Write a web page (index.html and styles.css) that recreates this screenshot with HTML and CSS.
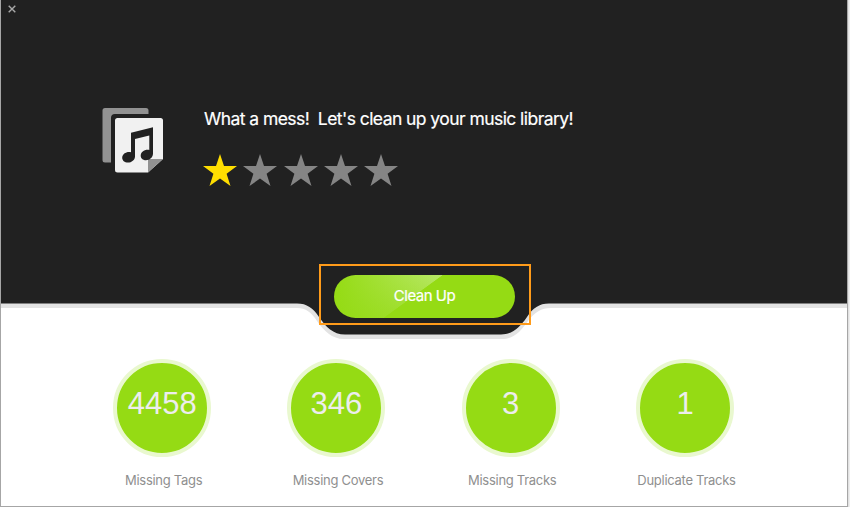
FILE: index.html
```html
<!DOCTYPE html>
<html lang="en">
<head>
<meta charset="utf-8">
<title>Music Library Clean Up</title>
<link rel="stylesheet" href="styles.css">
</head>
<body>
<main class="window">
  <header class="hero">
    <svg class="hero-shape" width="846" height="342" viewBox="1 0 846 342" aria-hidden="true">
      <path fill="#e3e3e3" d="M1 0H847V308H551C541 308 535 312 528 321C521 331 514 339 502 339H344C332 339 324 331 317 321C311 312 306 308 297 308H1Z"/>
      <path fill="#212121" d="M1 0H847V303.500H549C539 303.500 533 308 527 317C520 327 513 334.500 501 334.500H345C333 334.500 326 327 319 317C313 308 307 303.500 297 303.500H1Z"/>
    </svg>
    <button class="close" aria-label="Close">
      <svg width="8" height="8" viewBox="0 0 8 8"><path d="M.7.7 7.300 7.300M7.300.7.7 7.300" stroke="#a9a9a9" stroke-width="1.400"/></svg>
    </button>
    <section class="summary">
      <svg class="library-icon" width="62" height="66" viewBox="102 108 62 66" aria-hidden="true">
        <path fill="#929292" d="M105 108H146Q148.500 108 148.500 110.500V114H115Q111 114 111 118V162.500H105Q102.500 162.500 102.500 160V110.500Q102.500 108 105 108Z"/>
        <path fill="#f1f1f1" d="M117.500 118H160.500Q163 118 163 120.500V159L148 172.500H117.500Q115 172.500 115 170V120.500Q115 118 117.500 118Z"/>
        <path fill="#929292" d="M148 159H163L148 172.500Z"/>
        <path fill="#212121" d="M131 132.800 153 127.200V153.500C153 157.500 149.500 160.200 146 160.200C142.500 160.200 140.700 158 140.700 155.700C140.700 152.200 144 149.700 147.500 149.700C148.300 149.700 148.900 149.800 149.300 150V135.500L135 139V156.500C135 160 131.500 162.600 128 162.600C124.500 162.600 122.200 160.400 122.200 157.800C122.200 154.400 125.500 152 129 152C129.800 152 130.500 152.100 131 152.300Z"/>
      </svg>
      <div class="verdict">
        <h1>What a mess!&nbsp; Let's clean up your music library!</h1>
        <div class="stars" aria-label="1 of 5 stars">
          <svg class="star lit" viewBox="0 0 34 32"><path d="M17 0 21 11.900 34 12 23.600 19.700 27.500 32 17 24.600 6.500 32 10.400 19.700 0 12 13 11.900Z"/></svg>
          <svg class="star" viewBox="0 0 34 32"><path d="M17 0 21 11.900 34 12 23.600 19.700 27.500 32 17 24.600 6.500 32 10.400 19.700 0 12 13 11.900Z"/></svg>
          <svg class="star" viewBox="0 0 34 32"><path d="M17 0 21 11.900 34 12 23.600 19.700 27.500 32 17 24.600 6.500 32 10.400 19.700 0 12 13 11.900Z"/></svg>
          <svg class="star" viewBox="0 0 34 32"><path d="M17 0 21 11.900 34 12 23.600 19.700 27.500 32 17 24.600 6.500 32 10.400 19.700 0 12 13 11.900Z"/></svg>
          <svg class="star" viewBox="0 0 34 32"><path d="M17 0 21 11.900 34 12 23.600 19.700 27.500 32 17 24.600 6.500 32 10.400 19.700 0 12 13 11.900Z"/></svg>
        </div>
      </div>
    </section>
    <div class="highlight"><button class="clean">Clean Up</button></div>
  </header>
  <section class="stats">
    <div class="stat"><div class="count">4458</div><div class="label">Missing Tags</div></div>
    <div class="stat"><div class="count">346</div><div class="label">Missing Covers</div></div>
    <div class="stat"><div class="count">3</div><div class="label">Missing Tracks</div></div>
    <div class="stat"><div class="count">1</div><div class="label">Duplicate Tracks</div></div>
  </section>
</main>
</body>
</html>
```
FILE: styles.css
```css
* { box-sizing: border-box; }
body {
  margin: 0;
  width: 850px;
  height: 507px;
  overflow: hidden;
  background: linear-gradient(to right, #fff 847px, #cfcfcf 847px, #f4f4f4 850px);
  font-family: Inter, "Liberation Sans", sans-serif;
}
.window {
  width: 848px;
  height: 507px;
  background: #fff;
  border: 1px solid #a6a6a6;
  border-top: 0;
}
button { border: 0; padding: 0; background: none; font: inherit; }
.hero {
  position: relative;
  height: 342px;
  display: flex;
  flex-direction: column;
}
.hero-shape { position: absolute; left: 0; top: 0; z-index: 0; }
.close {
  position: relative;
  width: 8px;
  height: 8px;
  margin: 5px 0 0 7px;
}
.close svg { display: block; }
.summary {
  position: relative;
  display: flex;
  height: 80px;
  margin: 95px 0 0 101px;
}
.verdict { margin-left: 40px; }
h1 {
  margin: 0;
  height: 22px;
  color: #fff;
  font-size: 17.500px;
  font-weight: 400;
  line-height: 22px;
  letter-spacing: -0.560px;
  white-space: nowrap;
  -webkit-text-stroke: 0.200px #fff;
}
.stars { display: flex; gap: 6.300px; margin: 24px 0 0 -1px; }
.star { width: 34px; height: 32px; fill: #858585; }
.star.lit { fill: #ffde00; }
.highlight {
  position: relative;
  width: 212px;
  height: 61px;
  margin: 76px 0 0 318px;
  padding: 9px 0 0 13px;
  border: 2px solid #ff9b1a;
}
.clean {
  display: block;
  width: 181px;
  height: 43px;
  padding-bottom: 1px;
  border-radius: 22px;
  color: #fff;
  font-size: 15px;
  line-height: 40px;
  letter-spacing: -0.500px;
  -webkit-text-stroke: 0.200px #fff;
  background:
    linear-gradient(144deg, transparent 45%, #95db14 45.500%),
    linear-gradient(to right, #95db14 0, rgba(149,219,20,0) 60%),
    linear-gradient(to bottom, #b9e868 0, #a2df35 100%);
}
.stats {
  display: grid;
  grid-template-columns: repeat(4, 174.300px);
  margin: 17px 0 0 74px;
}
.stat { display: flex; flex-direction: column; align-items: center; }
.count {
  width: 98px;
  height: 98px;
  border: 4px solid #e9f8cf;
  border-radius: 50%;
  background: #95db14;
  color: #ededed;
  font-family: "Liberation Sans", sans-serif;
  font-size: 31px;
  line-height: 82px;
  text-align: center;
}
.label {
  margin: 14px 0 0 3px;
  color: #8f8f8f;
  font-size: 13px;
  line-height: 18px;
  letter-spacing: -0.280px;
  white-space: nowrap;
}
```
